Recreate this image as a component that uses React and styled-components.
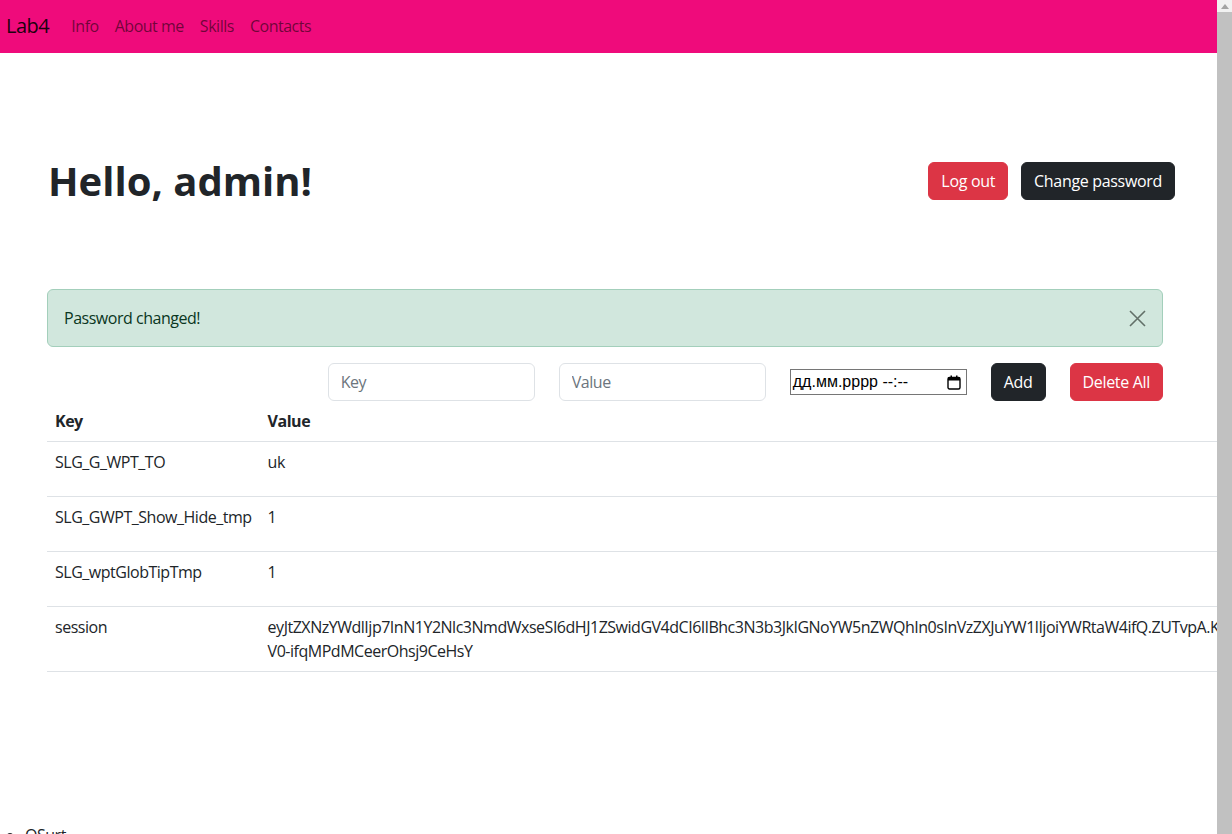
import styled, { createGlobalStyle } from "styled-components";

const GlobalStyle = createGlobalStyle`
  html {
    overflow-x: hidden;
  }
  body {
    margin: 0;
    font-family: "Segoe UI", "Open Sans", "Noto Sans", sans-serif;
    font-size: 16px;
    line-height: 24px;
    letter-spacing: -0.03em;
    color: #212529;
    background: #fff;
    overflow-x: hidden;
  }
  * {
    box-sizing: border-box;
  }
`;

// the reference shows the browser's classic scrollbar; headless hides it
const Scrollbar = styled.div`
  position: fixed;
  top: 0;
  right: 0;
  bottom: 0;
  width: 15px;
  background-color: #f1f1f1;
  display: flex;
  flex-direction: column;
  z-index: 10;
`;

const ScrollArrow = styled.div`
  height: 12px;
  display: flex;
  justify-content: center;
  align-items: center;
`;

const ScrollThumb = styled.div`
  flex: 1;
  background-color: #c1c1c1;
`;

const Navbar = styled.nav`
  height: 53px;
  background-color: #ef0b7b;
  display: flex;
  align-items: center;
  padding: 0 6px 2px;
`;

const Brand = styled.a`
  font-size: 20px;
  line-height: 30px;
  color: rgba(0, 0, 0, 0.9);
  margin-right: 14px;
  text-decoration: none;
`;

const NavLink = styled.a`
  padding: 8px;
  color: rgba(0, 0, 0, 0.55);
  text-decoration: none;
`;

const Main = styled.main`
  width: 1163px;
  padding: 104px 0 0 47px;
`;

const Header = styled.div`
  display: flex;
  justify-content: space-between;
  align-items: center;
  margin: 0 -12px 0 1px;
`;

const Title = styled.h1`
  margin: 0;
  font-size: 40px;
  line-height: 48px;
  font-weight: 700;
  letter-spacing: 0;
`;

const ButtonGroup = styled.div`
  display: flex;
  gap: 13px;
`;

const Button = styled.button`
  font-family: inherit;
  font-size: 16px;
  line-height: 24px;
  letter-spacing: -0.02em;
  padding: 6px 12px;
  border-radius: 6px;
  border: 1px solid ${(p) => (p.$variant === "danger" ? "#dc3545" : "#212529")};
  background-color: ${(p) => (p.$variant === "danger" ? "#dc3545" : "#212529")};
  color: #fff;
  cursor: pointer;
`;

const Alert = styled.div`
  margin-top: 84px;
  margin-bottom: 16px;
  padding: 16px;
  border: 1px solid #a3cfbb;
  border-radius: 6px;
  background-color: #d1e7dd;
  color: #0a3622;
  display: flex;
  justify-content: space-between;
  align-items: center;
`;

const CloseButton = styled.button`
  border: 0;
  background: none;
  padding: 0;
  width: 17px;
  height: 17px;
  display: flex;
  cursor: pointer;
`;

const Controls = styled.form`
  display: flex;
  justify-content: flex-end;
  align-items: center;
  gap: 24px;
`;

const Input = styled.input`
  width: 207px;
  height: 38px;
  padding: 6px 12px;
  font-family: inherit;
  font-size: 16px;
  letter-spacing: -0.03em;
  color: #212529;
  border: 1px solid #dee2e6;
  border-radius: 6px;
  outline: none;
  &::placeholder {
    color: #6c757d;
  }
`;

const DateField = styled.div`
  width: 177px;
  height: 26px;
  border: 1px solid #767676;
  display: flex;
  align-items: center;
  justify-content: space-between;
  padding: 0 5px 0 2px;
  font-family: "Liberation Sans", Arial, sans-serif;
  font-size: 16px;
  letter-spacing: 0;
  color: #000;
`;

const Table = styled.table`
  border-collapse: collapse;
  min-width: 100%;
  th,
  td {
    text-align: left;
    vertical-align: top;
    padding: 8px;
    border-bottom: 1px solid #dee2e6;
  }
  td {
    height: 55px;
  }
  th {
    font-weight: 700;
  }
`;

const NoWrap = styled.span`
  display: block;
  white-space: nowrap;
`;

const Footer = styled.ul`
  margin: 151px 0 16px;
  padding-left: 25px;
`;

const CalendarIcon = () => (
  <svg width="14" height="15" viewBox="0 0 14 15">
    <rect x="1" y="2.5" width="12" height="11.5" rx="1.5" fill="none" stroke="#000" strokeWidth="1.4" />
    <rect x="1" y="2.5" width="12" height="3" fill="#000" />
    <rect x="3.5" y="0.5" width="1.5" height="3" fill="#000" />
    <rect x="9" y="0.5" width="1.5" height="3" fill="#000" />
  </svg>
);

const CloseIcon = () => (
  <svg width="17" height="17" viewBox="0 0 17 17">
    <path d="M1 1 L16 16 M16 1 L1 16" stroke="#627068" strokeWidth="1.6" />
  </svg>
);

const UpArrow = () => (
  <svg width="8" height="5" viewBox="0 0 8 5">
    <path d="M0 5 L4 0 L8 5 Z" fill="#a3a3a3" />
  </svg>
);

const rows = [
  { key: "SLG_G_WPT_TO", value: ["uk"] },
  { key: "SLG_GWPT_Show_Hide_tmp", value: ["1"] },
  { key: "SLG_wptGlobTipTmp", value: ["1"] },
  {
    key: "session",
    value: [
      "eyJtZXNzYWdlIjp7InN1Y2Nlc3NmdWxseSI6dHJ1ZSwidGV4dCI6IlBhc3N3b3JkIGNoYW5nZWQhIn0sInVzZXJuYW1lIjoiYWRtaW4ifQ.ZUTvpA.Kf3s8c-",
      "V0-ifqMPdMCeerOhsj9CeHsY",
    ],
  },
];

export default function App() {
  return (
    <>
      <GlobalStyle />
      <Navbar>
        <Brand href="#">Lab4</Brand>
        <NavLink href="#">Info</NavLink>
        <NavLink href="#">About me</NavLink>
        <NavLink href="#">Skills</NavLink>
        <NavLink href="#">Contacts</NavLink>
      </Navbar>
      <Main>
        <Header>
          <Title>Hello, admin!</Title>
          <ButtonGroup>
            <Button $variant="danger">Log out</Button>
            <Button $variant="dark">Change password</Button>
          </ButtonGroup>
        </Header>
        <Alert>
          <span>Password changed!</span>
          <CloseButton type="button" aria-label="Close">
            <CloseIcon />
          </CloseButton>
        </Alert>
        <Controls onSubmit={(e) => e.preventDefault()}>
          <Input placeholder="Key" />
          <Input placeholder="Value" />
          <DateField>
            <span>дд.мм.рррр --:--</span>
            <CalendarIcon />
          </DateField>
          <Button $variant="dark" type="submit">Add</Button>
          <Button $variant="danger" type="button">Delete All</Button>
        </Controls>
        <Table>
          <thead>
            <tr>
              <th>Key</th>
              <th>Value</th>
            </tr>
          </thead>
          <tbody>
            {rows.map((row) => (
              <tr key={row.key}>
                <td>{row.key}</td>
                <td>
                  {row.value.map((line) => (
                    <NoWrap key={line}>{line}</NoWrap>
                  ))}
                </td>
              </tr>
            ))}
          </tbody>
        </Table>
      </Main>
      <Footer>
        <li>QSurt</li>
      </Footer>
      <Scrollbar>
        <ScrollArrow>
          <UpArrow />
        </ScrollArrow>
        <ScrollThumb />
      </Scrollbar>
    </>
  );
}
